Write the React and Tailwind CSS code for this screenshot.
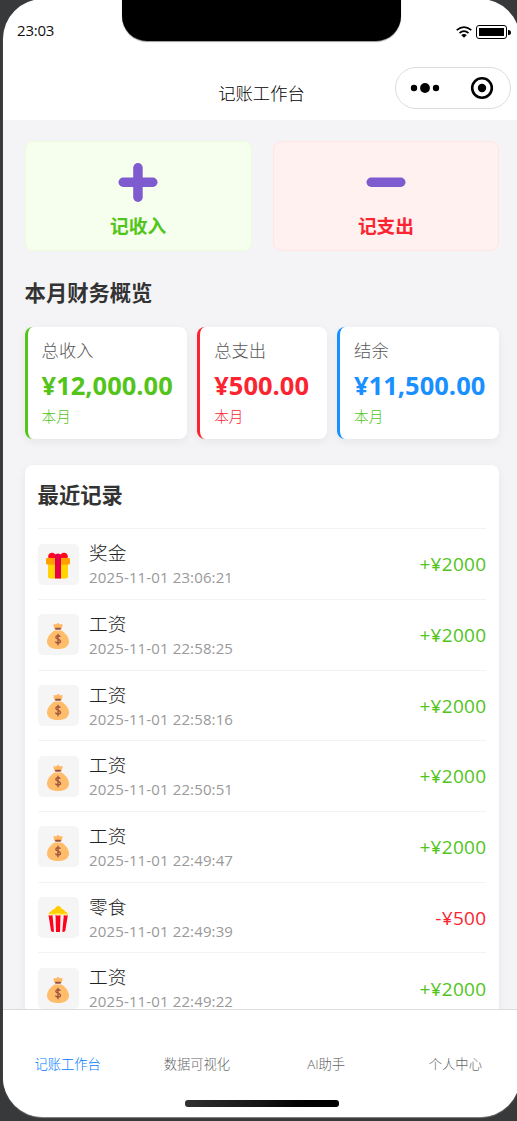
const registros = [
  { icono: 'regalo', nombre: '奖金', fecha: '2025-11-01 23:06:21', monto: 2000 },
  { icono: 'bolsa', nombre: '工资', fecha: '2025-11-01 22:58:25', monto: 2000 },
  { icono: 'bolsa', nombre: '工资', fecha: '2025-11-01 22:58:16', monto: 2000 },
  { icono: 'bolsa', nombre: '工资', fecha: '2025-11-01 22:50:51', monto: 2000 },
  { icono: 'bolsa', nombre: '工资', fecha: '2025-11-01 22:49:47', monto: 2000 },
  { icono: 'palomitas', nombre: '零食', fecha: '2025-11-01 22:49:39', monto: -500 },
  { icono: 'bolsa', nombre: '工资', fecha: '2025-11-01 22:49:22', monto: 2000 }
];

const pestanas = ['记账工作台', '数据可视化', 'AI助手', '个人中心'];

function IconoRegalo() {
  return (
    <svg viewBox="0 0 26 28" className="w-[26px] h-7">
      <path d="M3 9h20v15.500q0 2-2 2H5q-2 0-2-2z" fill="#ffd400" />
      <path d="M3 9h20v3.500H3z" fill="#ffb800" />
      <rect x="1" y="6" width="24" height="6.500" rx="1.200" fill="#ffa000" />
      <path d="M3.500 6C2 2.500 5.500-.5 9 1.200L10.500 2.500h5L17 1.200C20.500-.5 24 2.500 22.500 6z" fill="#ff0b20" />
      <path d="M10 3q1-1.500 3-1.500T16 3v23.500h-6z" fill="#e6004c" />
    </svg>
  );
}

function IconoBolsa() {
  return (
    <svg viewBox="0 0 26 28" className="w-[26px] h-7">
      <path d="M9.500 7L8.300 2.700Q9.500 1.500 11 2.500L13 .7l2 1.800q1.600-1 2.700.2L16.500 7z" fill="#ffb866" />
      <path d="M9.500 8.500h7C20 10.500 24 15 24 19.500c0 5-4.500 7.500-11 7.500S2 24.500 2 19.500C2 15 6 10.500 9.500 8.500z" fill="#ffbd6c" />
      <rect x="10" y="5.800" width="6" height="2" rx="1" fill="#965044" />
      <path d="M15.300 14.700C14.800 13.500 11 13.200 10.800 15.300c0 2.400 4.700 1.400 4.700 4 0 2.200-4.500 2.300-5 .2M13 11.800v11.400" fill="none" stroke="#a15640" strokeWidth="1.400" />
    </svg>
  );
}

function IconoPalomitas() {
  return (
    <svg viewBox="0 0 26 28" className="w-[26px] h-7">
      <path d="M4 10Q3 7.500 6 6.500 7 4 9.500 4 11 1 13.300.8 15.500 1 17 4q2.500 0 3 2.500 3 1 2.500 3.500v2H4z" fill="#ffcd00" />
      <path d="M4 9q3-1 5 0 4-1.500 8 0 3-1 5.500 0v2H4z" fill="#fff06a" />
      <path d="M3.500 10h19.300l-2 16.800H5.500z" fill="#fff3f2" />
      <path d="M3.500 10q2 1 4 0l1.500 16.800q-2.500.5-3-1zM10.500 10q2.500 1 5 0l-.5 17h-4zM22.800 10q-2 1-4 0l-1.500 16.800q2.500.5 3-1z" fill="#ff001f" />
    </svg>
  );
}

const iconos = { regalo: IconoRegalo, bolsa: IconoBolsa, palomitas: IconoPalomitas };

function BarraEstado() {
  return (
    <div className="relative h-[62px] shrink-0 flex justify-between pl-3.5 pr-[9px] pt-[19px]">
      <div className="absolute left-[119px] top-0 w-[279px] h-[42px] rounded-b-[25px] bg-black shadow-[0_1px_1px_#999]" />
      <span className="text-[15px] leading-6 tracking-[-0.2px] text-[#111]">23:03</span>
      <div className="flex items-start pt-px">
        <svg viewBox="0 0 16 12" className="w-4 h-3 mt-[7px] mr-1" fill="none" stroke="#000" strokeWidth="1.700">
          <path d="M.7 4.200Q8-2 15.300 4.200M3.500 7Q8 3.400 12.500 7" />
          <path d="M5.200 9Q8 7.200 10.800 9L8 11.700z" fill="#000" stroke="none" />
        </svg>
        <div className="mt-1.5 w-[31px] h-3.5 rounded-[3px] border border-black p-0.5">
          <div className="h-full bg-black" />
        </div>
        <div className="mt-[11px] ml-px w-[3px] h-[5px] rounded-r-full bg-black" />
      </div>
    </div>
  );
}

function Encabezado() {
  return (
    <div className="relative h-[59px] shrink-0 flex justify-center">
      <h1 className="mt-[21px] text-[17.300px] leading-6 font-light text-black">记账工作台</h1>
      <div className="absolute right-[9px] top-[6px] w-[116px] h-[42px] rounded-full border border-[#dcdcdc] flex items-center justify-between pl-3.5 pr-4">
        <svg viewBox="0 0 30 12" className="w-[30px] h-3">
          <circle cx="4" cy="6" r="3.200" />
          <circle cx="15" cy="6" r="4.900" />
          <circle cx="26" cy="6" r="3.200" />
        </svg>
        <svg viewBox="0 0 24 24" className="w-6 h-6">
          <circle cx="12" cy="12" r="9.800" fill="none" stroke="#000" strokeWidth="2.600" />
          <circle cx="12" cy="12" r="4.200" />
        </svg>
      </div>
    </div>
  );
}

function BotonAccion({ texto, signo, clase }) {
  return (
    <button className={`flex-1 h-[110px] rounded-lg border-[1.500px] flex flex-col items-center ${clase}`}>
      <svg viewBox="0 0 40 40" className="w-10 h-10 mt-5" fill="#7e5bcf">
        <rect x="0.500" y="15.500" width="39" height="9.500" rx="4.700" />
        {signo === '+' && <rect x="15.200" y="1" width="9.500" height="39" rx="4.700" />}
      </svg>
      <span className="mt-2.5 text-[18.700px] leading-7 font-bold">{texto}</span>
    </button>
  );
}

function TarjetaResumen({ titulo, monto, clase, colorMonto, colorMes }) {
  return (
    <div className={`h-28 rounded-lg border-l-[3px] bg-white shadow-[0_3px_10px_rgba(0,0,0,0.06)] pl-3.5 pt-3 ${clase}`}>
      <p className="text-[17.300px] leading-6 font-light text-[#555]">{titulo}</p>
      <p className={`mt-1 text-[25.500px] leading-9 font-bold ${colorMonto}`}>{monto}</p>
      <p className={`mt-[3px] text-[14.600px] leading-5 font-light ${colorMes}`}>本月</p>
    </div>
  );
}

function FilaRegistro({ registro }) {
  const Icono = iconos[registro.icono];
  const ingreso = registro.monto > 0;

  return (
    <div className="h-[70.700px] shrink-0 border-t border-[#f3f3f3] flex items-center">
      <div className="w-[41px] h-[41px] rounded-[5px] bg-[#f5f5f5] flex items-center justify-center pt-[3px] pr-px">
        <Icono />
      </div>
      <div className="ml-[10.500px] flex-1">
        <p className="text-[18.700px] leading-[26px] font-light text-[#222]">{registro.nombre}</p>
        <p className="text-[15px] leading-[22px] tracking-[0.13px] text-[#999]">{registro.fecha}</p>
      </div>
      <span className={`pt-px text-[19px] tracking-[0.3px] ${ingreso ? 'text-[#52c41a]' : 'text-[#fa2530]'}`}>
        {ingreso ? '+' : '-'}¥{Math.abs(registro.monto)}
      </span>
    </div>
  );
}

function BarraPestanas() {
  return (
    <div className="h-[108px] shrink-0 border-t border-[#dcdcdc] bg-white flex flex-col items-center">
      <div className="w-full flex pt-11">
        {pestanas.map((pestana, index) => (
          <span
            key={pestana}
            className={`flex-1 text-center text-[13.300px] leading-5 font-light ${index === 0 ? 'text-[#007aff]' : 'text-[#666]'}`}
          >
            {pestana}
          </span>
        ))}
      </div>
      <div className="mt-[26px] w-[154px] h-[7px] rounded-[3px] bg-linear-to-r from-[#303030] via-[#151515] to-black" />
    </div>
  );
}

export default function App() {
  return (
    <div className="w-[517px] h-[1121px] overflow-hidden bg-[#38393b] font-['Open_Sans','Noto_Sans_CJK_SC',sans-serif]">
      <div className="-mt-px ml-[3px] w-[517px] h-[1118px] rounded-[40px] overflow-hidden bg-white flex flex-col shadow-[0_1px_1px_#888]">
        <BarraEstado />
        <Encabezado />

        <main className="flex-1 min-h-0 overflow-hidden bg-[#f4f4f6] pl-[21.600px] pr-[20.600px] pt-[21px]">
          <div className="flex gap-[21px]">
            <BotonAccion texto="记收入" signo="+" clase="bg-[#f6ffed] border-[#ecfcd9] text-[#52c41a]" />
            <BotonAccion texto="记支出" signo="-" clase="bg-[#fff1f0] border-[#ffe6e3] text-[#fa2530]" />
          </div>

          <h2 className="mt-[26px] text-[21.300px] leading-8 font-bold text-[#333]">本月财务概览</h2>

          <div className="mt-[17.600px] flex justify-between">
            <TarjetaResumen
              titulo="总收入"
              monto="¥12,000.00"
              clase="w-[162.300px] border-[#52c41a]"
              colorMonto="text-[#52c41a]"
              colorMes="text-[#52c41a]"
            />
            <TarjetaResumen
              titulo="总支出"
              monto="¥500.00"
              clase="w-[129.500px] border-[#fa2530]"
              colorMonto="text-[#fa2530]"
              colorMes="text-[#fa2530]"
            />
            <TarjetaResumen
              titulo="结余"
              monto="¥11,500.00"
              clase="w-[162.300px] border-[#1890ff]"
              colorMonto="text-[#1890ff]"
              colorMes="text-[#52c41a]"
            />
          </div>

          <div className="mt-[26.500px] rounded-lg bg-white px-[13px] pt-3.5 shadow-[0_3px_10px_rgba(0,0,0,0.06)]">
            <h2 className="mb-[17.200px] text-[21.300px] leading-8 font-bold text-[#333]">最近记录</h2>
            {registros.map((registro) => (
              <FilaRegistro key={registro.fecha} registro={registro} />
            ))}
          </div>
        </main>

        <BarraPestanas />
      </div>
    </div>
  );
}
